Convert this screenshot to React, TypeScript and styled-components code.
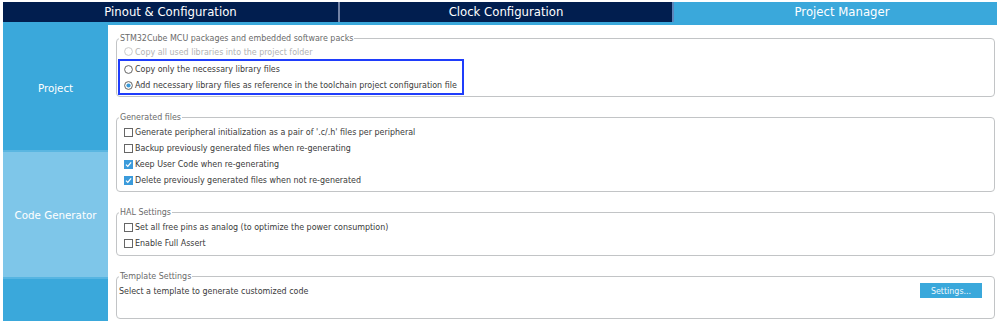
import React from 'react';
import styled, { createGlobalStyle } from 'styled-components';

const GlobalStyle = createGlobalStyle`
  body {
    margin: 0;
    background: #ffffff;
    font-family: 'DejaVu Sans', Verdana, sans-serif;
  }
`;

const tabs = [
  { label: 'Pinout & Configuration', width: 335, active: false },
  { label: 'Clock Configuration', width: 332, active: false },
  { label: 'Project Manager', width: 0, active: true },
];

const generatedFiles = [
  { label: "Generate peripheral initialization as a pair of '.c/.h' files per peripheral", checked: false },
  { label: 'Backup previously generated files when re-generating', checked: false },
  { label: 'Keep User Code when re-generating', checked: true },
  { label: 'Delete previously generated files when not re-generated', checked: true },
];

const halSettings = [
  { label: 'Set all free pins as analog (to optimize the power consumption)', checked: false },
  { label: 'Enable Full Assert', checked: false },
];

const Radio: React.FC<{ checked?: boolean; disabled?: boolean }> = ({ checked, disabled }) => (
  <RadioMark viewBox="0 0 9 9" width="9" height="9">
    <circle cx="4.5" cy="4.5" r="3.9" fill="#fff" stroke={disabled ? '#c4c4c4' : '#555'} strokeWidth="0.9" />
    {checked && <circle cx="4.5" cy="4.5" r="2.1" fill="#3a9ad9" />}
  </RadioMark>
);

const Check: React.FC<{ checked?: boolean }> = ({ checked }) =>
  checked ? (
    <CheckMark viewBox="0 0 9 9" width="9" height="9">
      <rect x="0" y="0" width="9" height="9" fill="#3b9bdb" />
      <path d="M2 4.6 L3.8 6.4 L7.1 2.4" fill="none" stroke="#fff" strokeWidth="1.3" />
    </CheckMark>
  ) : (
    <CheckMark viewBox="0 0 9 9" width="9" height="9">
      <rect x="0.5" y="0.5" width="8" height="8" fill="#fff" stroke="#666" strokeWidth="1" />
    </CheckMark>
  );

const App: React.FC = () => {
  return (
    <Page>
      <GlobalStyle />
      <TabBar>
        {tabs.map((t) => (
          <Tab key={t.label} $active={t.active} $width={t.width}>
            {t.label}
          </Tab>
        ))}
      </TabBar>
      <Body>
        <Sidebar>
          <SideItem $light={false}>Project</SideItem>
          <SideItem $light>Code Generator</SideItem>
          <SideItem $light={false} $short />
        </Sidebar>
        <Content>
          <Group $top={0} $bottom={1}>
            <Legend>STM32Cube MCU packages and embedded software packs</Legend>
            <Row $disabled $height={15}>
              <Radio disabled />
              Copy all used libraries into the project folder
            </Row>
            <Highlight>
              <Row>
                <Radio />
                Copy only the necessary library files
              </Row>
              <Row>
                <Radio checked />
                Add necessary library files as reference in the toolchain project configuration file
              </Row>
            </Highlight>
          </Group>

          <Group $top={1} $bottom={3}>
            <Legend>Generated files</Legend>
            {generatedFiles.map((f) => (
              <Row key={f.label}>
                <Check checked={f.checked} />
                {f.label}
              </Row>
            ))}
          </Group>

          <Group $top={1} $bottom={4}>
            <Legend>HAL Settings</Legend>
            {halSettings.map((f) => (
              <Row key={f.label}>
                <Check checked={f.checked} />
                {f.label}
              </Row>
            ))}
          </Group>

          <Group $top={0} $bottom={19}>
            <Legend>Template Settings</Legend>
            <TemplateRow>
              Select a template to generate customized code
              <SettingsButton>Settings...</SettingsButton>
            </TemplateRow>
          </Group>
        </Content>
      </Body>
    </Page>
  );
};

const Page = styled.div`
  width: 999px;
  height: 321px;
  overflow: hidden;
  padding-left: 3px;
  padding-top: 2px;
  box-sizing: border-box;
  display: flex;
  flex-direction: column;
`;

const TabBar = styled.div`
  display: flex;
  height: 20px;
  border-bottom: 3px solid #3aa8db;
  margin-right: 2px;
`;

const Tab = styled.div<{ $active: boolean; $width: number }>`
  flex: ${(p) => (p.$width ? `0 0 ${p.$width}px` : '1')};
  display: flex;
  align-items: center;
  justify-content: center;
  padding-left: ${(p) => (p.$active ? '13px' : '0')};
  background: ${(p) => (p.$active ? '#3aa8db' : '#011e4f')};
  color: #ffffff;
  font-size: 11.7px;
  font-family: 'DejaVu Sans', Verdana, sans-serif;
  border-right: 2px solid #7383a6;
  &:last-child {
    border-right: none;
  }
  &:nth-child(2) {
    border-right: 2px solid #5d86bb;
  }
`;

const Body = styled.div`
  flex: 1;
  display: flex;
  min-height: 0;
`;

const Sidebar = styled.div`
  width: 105px;
  display: flex;
  flex-direction: column;
`;

const SideItem = styled.div<{ $light: boolean; $short?: boolean }>`
  height: ${(p) => (p.$short ? 'auto' : '125px')};
  flex: ${(p) => (p.$short ? '1' : 'none')};
  display: flex;
  align-items: center;
  justify-content: center;
  background: ${(p) => (p.$light ? '#7ec6e9' : '#3aa8db')};
  border-bottom: 2px solid ${(p) => (p.$light ? '#56b5e2' : '#5ab6e1')};
  color: #ffffff;
  font-size: 10.3px;
  &:last-child {
    border-bottom: none;
  }
`;

const Content = styled.div`
  flex: 1;
  padding: 8px 4px 0 8px;
  display: flex;
  flex-direction: column;
  gap: 15px;
  font-family: 'DejaVu Sans Condensed', 'DejaVu Sans', sans-serif;
  font-size: 8.85px;
  color: #3a3a3a;
`;

const Group = styled.fieldset<{ $top: number; $bottom: number }>`
  margin: 0;
  padding: ${(p) => `${p.$top}px 1px ${p.$bottom}px 1px`};
  border: 1px solid #c2c4c6;
  border-radius: 4px;
  min-width: 0;
`;

const Legend = styled.legend`
  padding: 0 1px;
  margin-left: 1px;
  color: #6a6a6a;
  font-size: 8.85px;
  line-height: 11px;
`;

const Row = styled.div<{ $disabled?: boolean; $height?: number }>`
  display: flex;
  align-items: center;
  gap: 2px;
  height: ${(p) => p.$height ?? 16}px;
  padding-left: 6px;
  color: ${(p) => (p.$disabled ? '#b2b2b2' : '#3a3a3a')};
  white-space: nowrap;
`;

const Highlight = styled.div`
  width: 342px;
  border: 2px solid #1f3dfb;
  ${Row} {
    padding-left: 4px;
  }
`;

const RadioMark = styled.svg`
  flex: none;
`;

const CheckMark = styled.svg`
  flex: none;
`;

const TemplateRow = styled.div`
  display: flex;
  align-items: center;
  justify-content: space-between;
  height: 17px;
  padding-left: 1px;
  padding-right: 11px;
`;

const SettingsButton = styled.button`
  width: 62px;
  height: 15px;
  padding: 0;
  border: none;
  background: #3aa8db;
  color: #eef8fd;
  font-family: 'DejaVu Sans Condensed', 'DejaVu Sans', sans-serif;
  font-size: 8.85px;
`;

export default App;
